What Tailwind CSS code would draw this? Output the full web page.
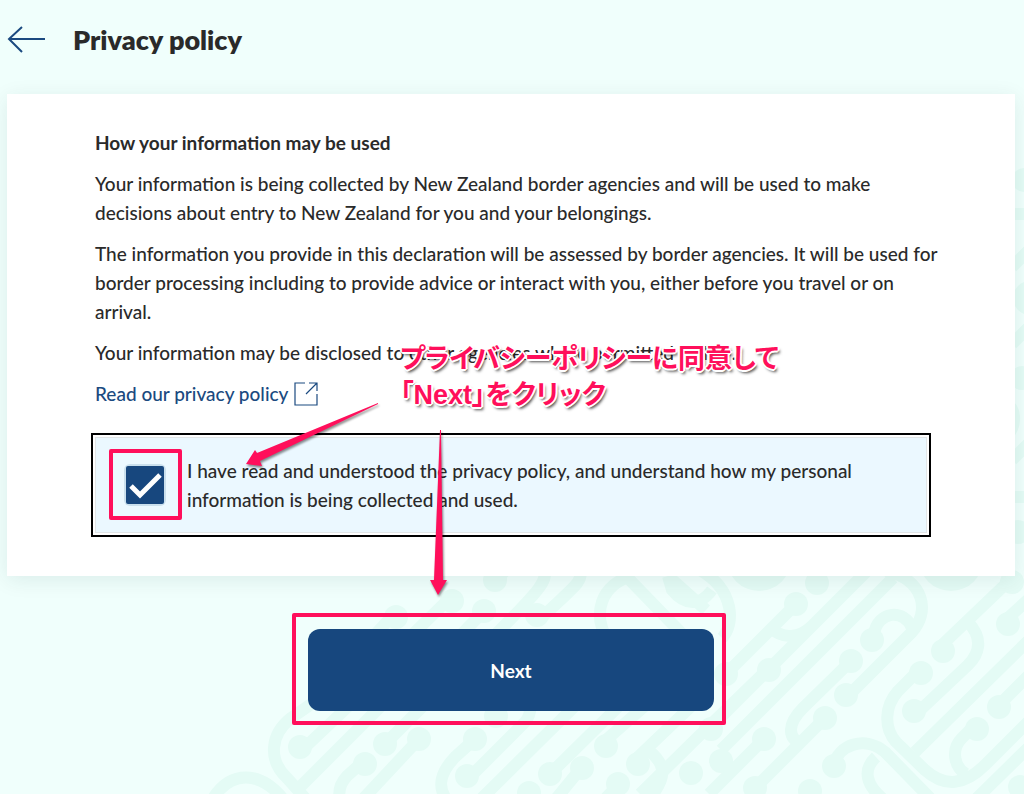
<!DOCTYPE html>
<html lang="en">
<head>
  <meta charset="UTF-8" />
  <meta name="viewport" content="width=device-width, initial-scale=1" />
  <title>Privacy policy</title>
  <script src="https://cdn.jsdelivr.net/npm/@tailwindcss/browser@4"></script>
</head>
<body class="relative min-h-screen overflow-x-hidden bg-[#f0fffc] font-[Lato,'Noto_Sans_CJK_JP',sans-serif] text-[19px] leading-[29px] font-medium text-[#2a2a2a]">

  <!-- Background pattern -->
  <svg class="absolute top-0 right-0 -z-10 h-[794px] w-[1024px]" viewBox="0 0 1024 794" fill="none" stroke="#e4fbf5" stroke-width="12" aria-hidden="true">
    <path d="M770 627C782 640 800 638 812 626L866 572L711 727M796 604L727 673M893 578L721 750M886 571C925 580 930 612 912 632L847 697M874 634C878 610 905 609 912 628M851 661L803 708C788 723 786 738 803 745M825 718L755 788M764 739L709 794M769 668L700 735L640 794M834 765C838 745 865 735 885 752L930 798M876 757C862 770 866 785 884 800" />
    <path d="M943 644L1010 580M968 622C985 640 978 655 968 665L914 716M921 668L898 691C884 707 884 728 896 742L925 770C945 788 965 785 985 765L1030 720M915 752L1030 639M1008 618L1030 598M1000 704L1030 674M977 723L962 738C950 750 955 768 966 774M975 800L1030 746" />
    <path d="M320 698L291 718C270 735 268 760 287 778L305 798M300 752L355 700M297 790L390 697M212 800C230 770 260 770 284 800M365 760L347 776C336 788 338 800 345 810M419 739L362 800M385 744L432 697M475 739L455 757C438 775 436 790 452 806M467 780L525 722Q532 714 530 700M482 798L584 697M550 774L628 697M582 767L555 800M606 740L655 697M638 757L704 694M648 750C668 765 666 780 648 800M619 784L604 800" />
    <path d="M396 612L370 640M452 596L410 637M484 611L456 640M498 578L520 556M544 570C548 580 540 590 496 634M580 570C584 582 572 588 537 622M632 576C600 585 592 615 608 640M626 576L688 640M668 576L672 590C685 606 700 606 712 590M668 576L706 610M700 570C735 590 735 625 722 638M1012 214H1030M1012 267L1030 249M1012 344L1030 326M1012 460L1030 442M1012 497H1030M999 404C1018 400 1018 430 1005 436" />
    <g fill="#e4fbf5" stroke="none">
      <circle cx="759" cy="559" r="32" /><circle cx="951" cy="559" r="32" />
      <circle cx="817" cy="583" r="12" /><circle cx="796" cy="604" r="12" /><circle cx="726" cy="674" r="12" />
      <circle cx="872" cy="640" r="12" /><circle cx="851" cy="661" r="12" /><circle cx="846" cy="695" r="12" />
      <circle cx="769" cy="670" r="12" /><circle cx="825" cy="718" r="12" /><circle cx="764" cy="739" r="12" />
      <circle cx="711" cy="729" r="12" /><circle cx="721" cy="761" r="12" /><circle cx="755" cy="788" r="12" />
      <circle cx="691" cy="773" r="12" /><circle cx="834" cy="766" r="12" /><circle cx="810" cy="791" r="12" />
      <circle cx="943" cy="651" r="12" /><circle cx="921" cy="673" r="12" /><circle cx="914" cy="711" r="12" />
      <circle cx="1008" cy="624" r="12" /><circle cx="1012" cy="582" r="12" /><circle cx="999" cy="707" r="12" />
      <circle cx="977" cy="729" r="12" /><circle cx="1020" cy="787" r="12" />
      <circle cx="300" cy="747" r="12" /><circle cx="365" cy="764" r="12" /><circle cx="385" cy="744" r="12" />
      <circle cx="419" cy="739" r="12" /><circle cx="475" cy="739" r="12" /><circle cx="467" cy="776" r="12" />
      <circle cx="496" cy="716" r="12" /><circle cx="550" cy="774" r="12" /><circle cx="582" cy="768" r="12" />
      <circle cx="606" cy="746" r="12" /><circle cx="638" cy="764" r="12" /><circle cx="618" cy="784" r="12" />
      <circle cx="529" cy="793" r="12" /><circle cx="396" cy="617" r="12" /><circle cx="452" cy="601" r="12" />
      <circle cx="484" cy="611" r="12" /><circle cx="495" cy="580" r="12" /><circle cx="537" cy="615" r="12" />
      <circle cx="1024" cy="180" r="12" /><circle cx="1030" cy="298" r="17" /><circle cx="1022" cy="378" r="12" /><circle cx="1018" cy="532" r="12" />
    </g>
  </svg>

  <!-- Header -->
  <header class="flex h-[94px] items-center gap-[27px] bg-[#f0fffc] pb-[14px] pl-[7px]">
    <a href="#" aria-label="Back">
      <svg class="h-[28px] w-[39px]" viewBox="0 0 39 28" fill="none" stroke="#1b4a80" stroke-width="2" aria-hidden="true">
        <path d="M38 13H2M15 1L2 13L15 26" />
      </svg>
    </a>
    <h1 class="text-[27px] leading-[36px] font-extrabold">Privacy policy</h1>
  </header>

  <main>
    <section class="mr-[9px] ml-[7px] bg-white px-[84px] pt-[34px] pb-[39px] shadow-[0_4px_20px_rgba(0,60,50,0.09)]">
      <div class="-mr-4 space-y-3 pl-1">
        <h2 class="font-bold">How your information may be used</h2>
        <p>Your information is being collected by New Zealand border agencies and will be used to make decisions about entry to New Zealand for you and your belongings.</p>
        <p>The information you provide in this declaration will be assessed by border agencies. It will be used for border processing including to provide advice or interact with you, either before you travel or on arrival.</p>
        <p>Your information may be disclosed to other agencies where permitted by law.</p>
        <a href="#" class="flex items-center gap-[6px] text-[#1b4a80]">
          Read our privacy policy
          <svg class="size-[24px]" viewBox="0 0 24 24" fill="none" stroke="currentColor" stroke-width="1.2" aria-hidden="true">
            <path d="M11 1H1V23H23V12M15 1H23V9M23 1L12 12" />
          </svg>
        </a>
      </div>

      <!-- Consent -->
      <div class="mt-[25px] border-2 border-black bg-white p-[2px]">
        <label for="consent" class="flex items-start gap-[21px] border border-[#e2e6e8] bg-[#ebf8ff] pt-[18px] pr-[60px] pb-[18px] pl-[28px]">
          <span class="relative mt-2 flex shrink-0 rounded-md bg-[#c9dfed] p-[2px]">
            <input id="consent" type="checkbox" checked class="peer size-[38px] appearance-none rounded-[2px] bg-[#17477e]" />
            <svg class="pointer-events-none absolute inset-[2px] hidden size-[38px] peer-checked:block" viewBox="0 0 38 38" fill="none" stroke="#fff" stroke-width="5" aria-hidden="true">
              <path d="M5 20L14 29L34 9" />
            </svg>
            <span class="pointer-events-none absolute -top-[15px] -left-[15px] h-[71px] w-[73px] rounded-[2px] border-[4px] border-[#ff0f5b]"></span>
          </span>
          <span>I have read and understood the privacy policy, and understand how my personal information is being collected and used.</span>
        </label>
      </div>
    </section>

    <div class="mt-[37px] flex justify-center pr-[6px]">
      <div class="w-full max-w-[434px] rounded-[2px] border-[4px] border-[#ff0f5b] pt-[12px] pr-[8px] pb-[10px] pl-[12px]">
        <button type="button" class="block h-[82px] w-full rounded-xl bg-[#17477e] font-bold text-white">Next</button>
      </div>
    </div>
  </main>

  <!-- Callout -->
  <svg class="pointer-events-none absolute top-0 left-0 h-[794px] w-[1024px] drop-shadow-[1px_2px_1px_rgba(0,0,0,0.45)]" viewBox="0 0 1024 794" fill="#ff0f5b" aria-hidden="true">
    <path d="M378 403L257 453L255 450L246 464L262 466L260 461L378 404Z" />
    <path d="M440 430H441L443 580L447 580L438 595L430 580L434 580Z" />
  </svg>
  <p lang="ja" class="pointer-events-none absolute top-[341px] left-[400px] font-['Liberation_Sans','Noto_Sans_CJK_JP',sans-serif] text-[27px] leading-[36px] font-bold whitespace-nowrap text-[#ff0f5b] [font-feature-settings:'palt'] [text-shadow:1px_1px_0_#fff,-1px_-1px_0_#fff,1px_-1px_0_#fff,-1px_1px_0_#fff,2px_0_0_#fff,-2px_0_0_#fff,0_2px_0_#fff,0_-2px_0_#fff,2px_3px_3px_rgba(0,0,0,0.7)]">プライバシーポリシーに同意して<br />「Next」をクリック</p>

</body>
</html>
